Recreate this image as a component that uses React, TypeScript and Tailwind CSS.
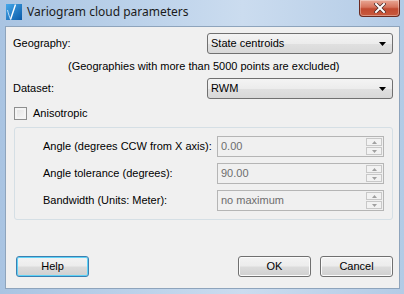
import React from "react";

const body = "font-['Liberation_Sans',Arial,sans-serif] text-[11px] leading-[13px] text-black";

function TitleIcon() {
  return (
    <svg width="16" height="16" viewBox="0 0 16 16">
      <defs>
        <linearGradient id="ti" x1="0" y1="0" x2="1" y2="1">
          <stop offset="0" stopColor="#46a8ea" />
          <stop offset="1" stopColor="#0a5aa8" />
        </linearGradient>
      </defs>
      <rect x="0" y="0" width="16" height="16" fill="url(#ti)" />
      <path d="M4.5 15.5 L9.5 0.5" stroke="#fff" strokeWidth="1.4" fill="none" />
      <path d="M1.5 6 C2.5 10 3.5 13 4.5 15.5" stroke="#dff0ff" strokeWidth="0.8" fill="none" />
    </svg>
  );
}

function CloseButton() {
  return (
    <div className="flex h-[17px] w-[41px] items-center justify-center rounded-b-[4px] border border-t-0 border-[#6b2a20] bg-[linear-gradient(#e9a896_0%,#d6735c_45%,#c14a31_55%,#c85a3e_100%)] shadow-[inset_0_0_0_1px_rgba(255,255,255,0.35)]">
      <svg width="12" height="10" viewBox="0 0 12 10">
        <path d="M2 1 L10 9 M10 1 L2 9" stroke="#4a2a28" strokeWidth="3.4" strokeLinecap="square" />
        <path d="M2 1 L10 9 M10 1 L2 9" stroke="#fff" strokeWidth="2" strokeLinecap="square" />
      </svg>
    </div>
  );
}

function Combo({ value }: { value: string }) {
  return (
    <div className="flex h-[21px] w-[186px] items-center justify-between rounded-[3px] border border-[#707070] bg-[linear-gradient(#f4f4f4_0%,#ececec_50%,#e0e0e0_52%,#d8d8d8_100%)] pl-[3px] pr-[6px]">
      <span>{value}</span>
      <svg width="7" height="4" viewBox="0 0 7 4">
        <path d="M0 0 H7 L3.5 4 Z" fill="#000" />
      </svg>
    </div>
  );
}

function Spinner({ value }: { value: string }) {
  return (
    <div className="flex h-[21px] w-[167px] items-center justify-between border border-[#b5b5b5] bg-[#f0f0f0] pl-[3px] pr-[1px]">
      <span className="text-[#6d6d6d]">{value}</span>
      <div className="flex flex-col gap-[1px]">
        <div className="flex h-[8px] w-[16px] items-center justify-center border border-[#c8c8c8] bg-[#f2f2f2]">
          <svg width="5" height="3" viewBox="0 0 5 3">
            <path d="M0 3 H5 L2.5 0 Z" fill="#a0a0a0" />
          </svg>
        </div>
        <div className="flex h-[8px] w-[16px] items-center justify-center border border-[#c8c8c8] bg-[#f2f2f2]">
          <svg width="5" height="3" viewBox="0 0 5 3">
            <path d="M0 0 H5 L2.5 3 Z" fill="#a0a0a0" />
          </svg>
        </div>
      </div>
    </div>
  );
}

function Btn({ label, focus }: { label: string; focus?: boolean }) {
  return (
    <button
      className={`h-[21px] w-[73px] rounded-[3px] border text-[11px] text-black bg-[linear-gradient(#f3f3f3_0%,#ececec_48%,#dcdcdc_52%,#d0d0d0_100%)] ${
        focus
          ? "border-[#3c7fb1] shadow-[inset_0_0_0_1px_#5fd3f7]"
          : "border-[#707070] shadow-[inset_0_0_0_1px_#fbfbfb]"
      }`}
    >
      {label}
    </button>
  );
}

const rows = [
  { label: "Angle (degrees CCW from X axis):", value: "0.00" },
  { label: "Angle tolerance (degrees):", value: "90.00" },
  { label: "Bandwidth (Units: Meter):", value: "no maximum" },
];

export default function App() {
  return (
    <div className="flex h-[294px] w-[404px] flex-col overflow-hidden bg-[linear-gradient(90deg,#a9c4e2_0%,#bcd2ea_35%,#cbdcef_60%,#b3cbe6_100%)]">
      {/* title bar */}
      <div className="flex h-[26px] shrink-0 items-start justify-between pl-[6px] pr-[4px]">
        <div className="flex items-center gap-[5px] pt-[4px]">
          <TitleIcon />
          <span className="font-['Noto_Sans',sans-serif] text-[12px] leading-[16px] text-[#1b1b1b]">
            Variogram cloud parameters
          </span>
        </div>
        <CloseButton />
      </div>

      {/* client area */}
      <div className={`mx-[5px] flex h-[263px] w-[395px] flex-col border border-[#8ea4bc] bg-[#f0f0f0] pl-[7px] pr-[6px] pt-[6px] ${body}`}>
        <div className="flex items-center justify-between">
          <span>Geography:</span>
          <Combo value="State centroids" />
        </div>
        <div className="mt-[6px] pl-[55px]">
          (Geographies with more than 5000 points are excluded)
        </div>
        <div className="mt-[5px] flex items-center justify-between">
          <span>Dataset:</span>
          <Combo value="RWM" />
        </div>
        <div className="mt-[8px] flex items-center gap-[6px] pl-[1px]">
          <div className="h-[13px] w-[13px] border border-[#8e8f8f] bg-[linear-gradient(135deg,#e2e2e2,#f7f7f7)] shadow-[inset_0_0_0_2px_#f4f4f4]" />
          <span>Anisotropic</span>
        </div>
        <div className="ml-[1px] mt-[7px] flex h-[93px] w-[379px] flex-col gap-[6px] rounded-[3px] border border-[#d5dfe5] pb-[8px] pl-[28px] pr-[8px] pt-[8px]">
          {rows.map((r) => (
            <div key={r.label} className="flex items-center justify-between">
              <span>{r.label}</span>
              <Spinner value={r.value} />
            </div>
          ))}
        </div>
        <div className="mt-auto mb-[11px] flex items-center pl-[3px]">
          <Btn label="Help" focus />
          <div className="ml-auto flex gap-[9px]">
            <Btn label="OK" />
            <Btn label="Cancel" />
          </div>
        </div>
      </div>
    </div>
  );
}
